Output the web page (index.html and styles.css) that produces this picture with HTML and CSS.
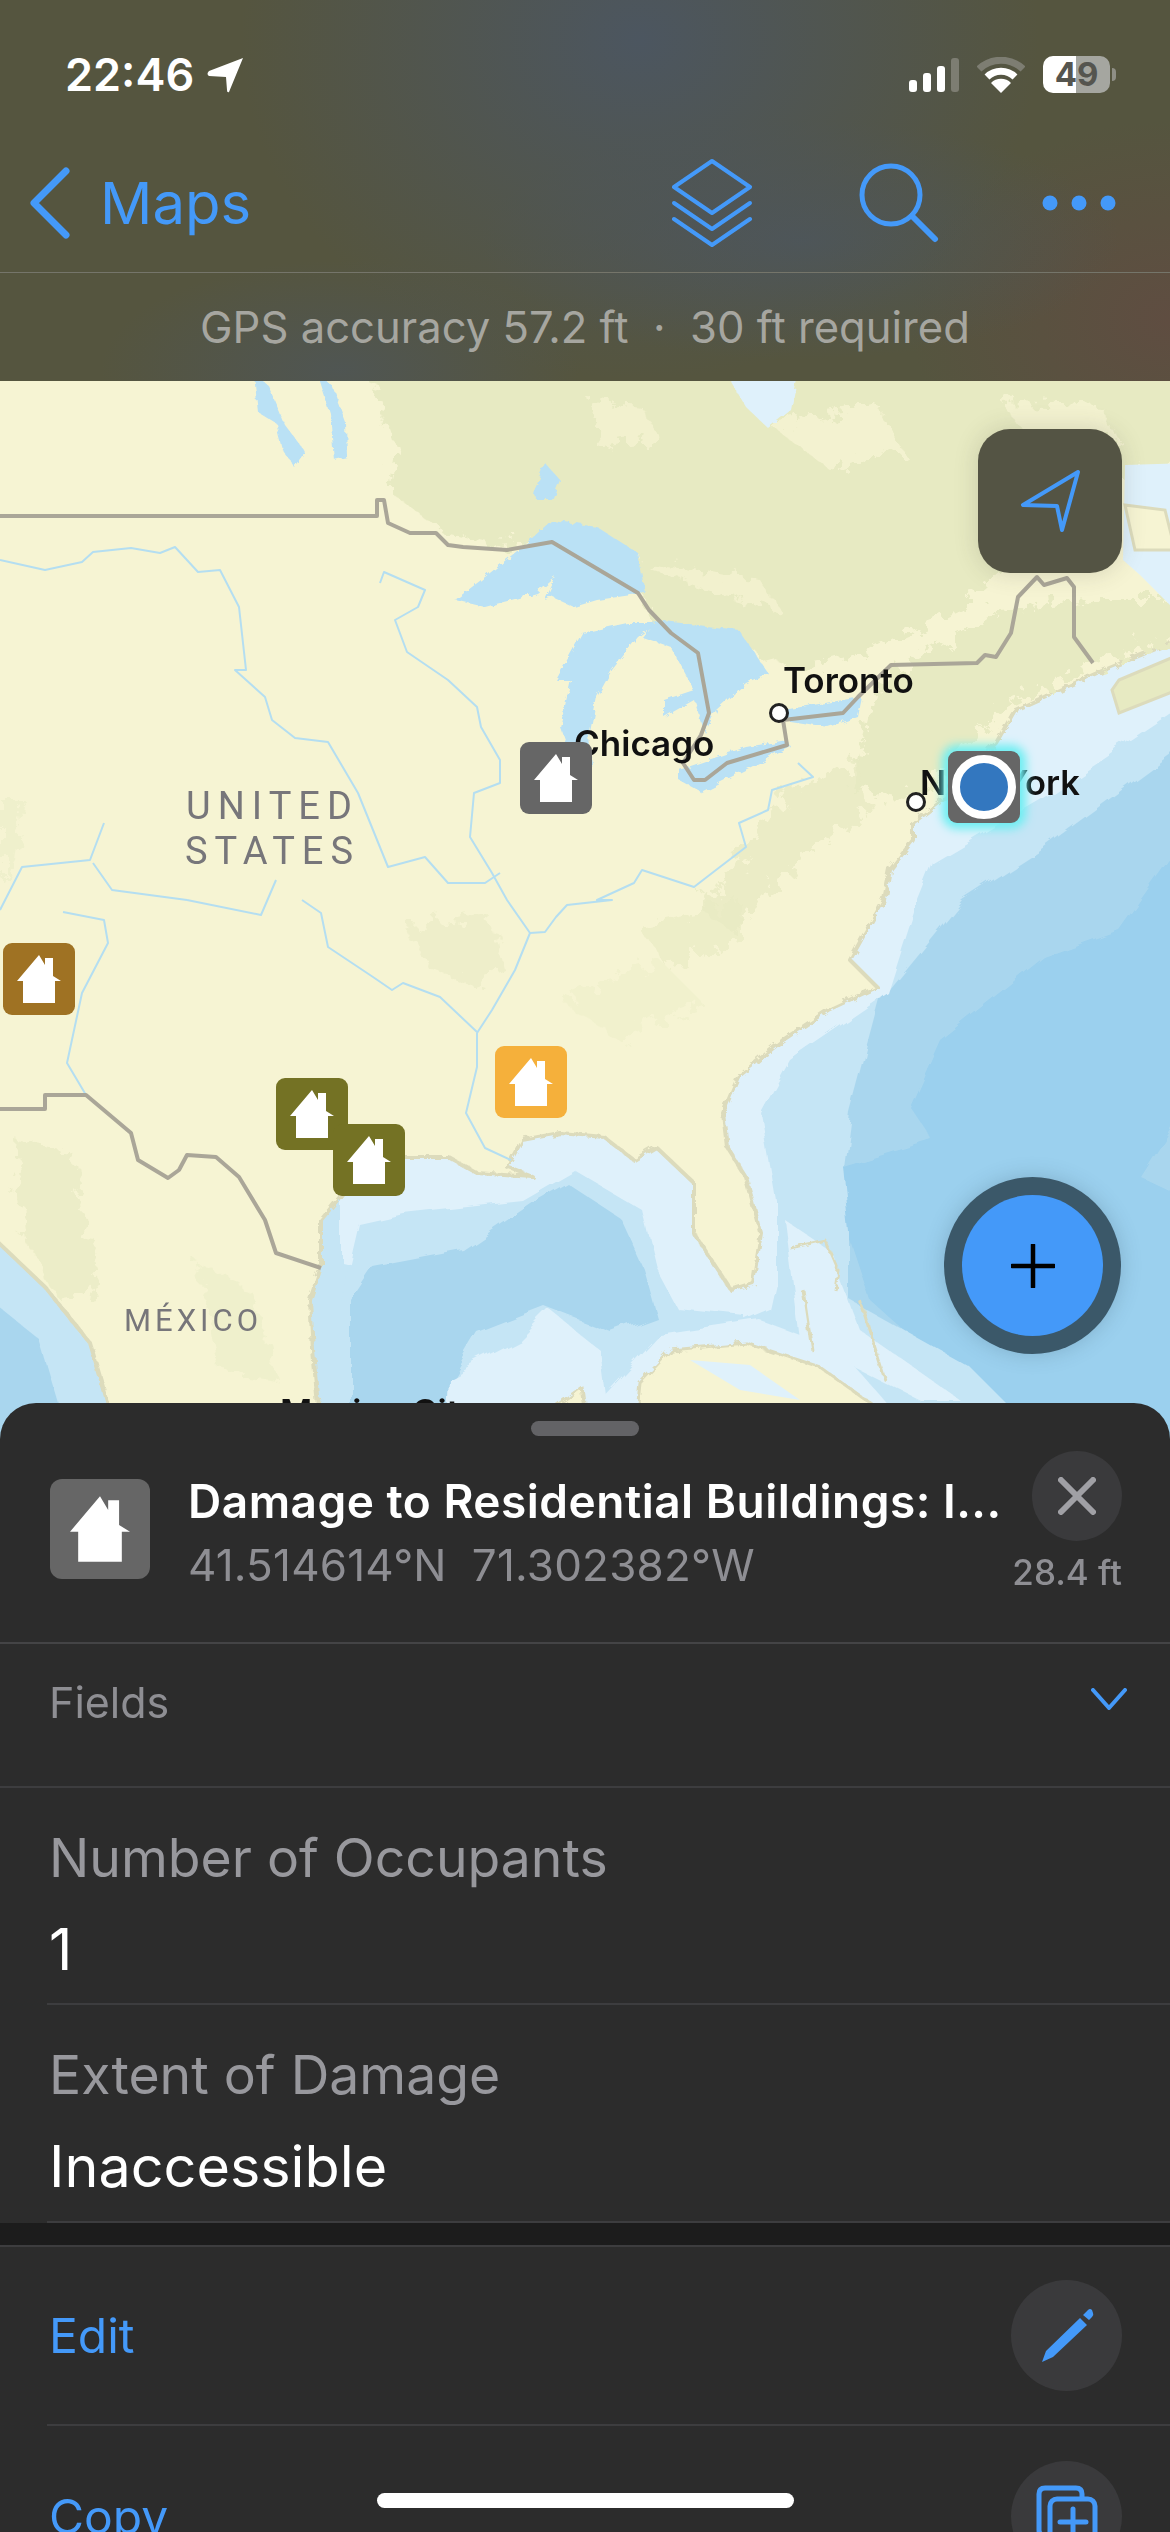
FILE: index.html
```html
<!DOCTYPE html>
<html lang="en">
<head>
    <meta charset="UTF-8">
    <meta name="viewport" content="width=device-width, initial-scale=1.0">
    <title>Maps</title>
    <link rel="stylesheet" href="styles.css">
</head>
<body>

<svg class="icon-defs" width="0" height="0">
    <defs>
        <symbol id="house" viewBox="0 0 44 48">
            <path d="M22 0 L28 10 V3 H36 V21 L44 26 H38 V48 H6 V26 H0 Z" fill="#fff"/>
        </symbol>
        <filter id="rough" x="-5%" y="-5%" width="110%" height="110%">
            <feTurbulence type="fractalNoise" baseFrequency="0.07" numOctaves="4" seed="4"/>
            <feDisplacementMap in="SourceGraphic" scale="34"/>
        </filter>
        <filter id="soft" x="-5%" y="-5%" width="110%" height="110%">
            <feTurbulence type="fractalNoise" baseFrequency="0.03" numOctaves="2" seed="9"/>
            <feDisplacementMap in="SourceGraphic" scale="14"/>
        </filter>
        <filter id="coast" x="-5%" y="-5%" width="110%" height="110%">
            <feTurbulence type="fractalNoise" baseFrequency="0.12" numOctaves="3" seed="2"/>
            <feDisplacementMap in="SourceGraphic" scale="7"/>
        </filter>
    </defs>
</svg>

<header class="top-bar">
    <div class="status-bar">
        <div class="status-time">
            <span>22:46</span>
            <svg width="37" height="35" viewBox="0 0 37 35"><path d="M36 0 L22 34 Q20 35 20 32 L19 19 L2 18 Q-1 16 2 13 Z" fill="#fff"/></svg>
        </div>
        <div class="status-icons">
            <svg width="50" height="34" viewBox="0 0 50 34">
                <rect x="0" y="22" width="8" height="12" rx="3" fill="#fff"/>
                <rect x="14" y="15" width="8" height="19" rx="3" fill="#fff"/>
                <rect x="28" y="8" width="8" height="26" rx="3" fill="#fff"/>
                <rect x="42" y="0" width="8" height="34" rx="3" fill="#7d7d72"/>
            </svg>
            <svg width="48" height="36" viewBox="0 0 48 36">
                <path d="M2 12 A32 32 0 0 1 46 12" fill="none" stroke="#7d7d72" stroke-width="7"/>
                <path d="M10 20 A20 20 0 0 1 38 20" fill="none" stroke="#fff" stroke-width="7"/>
                <path d="M24 36 L14 26 A14 14 0 0 1 34 26 Z" fill="#fff"/>
            </svg>
            <div class="battery">
                <span class="battery-level">49</span>
            </div>
        </div>
    </div>
    <nav class="nav-bar">
        <a class="back-link">
            <svg width="42" height="72" viewBox="0 0 42 72"><path d="M37 4 L5 36 L37 68" fill="none" stroke="#4499f9" stroke-width="7" stroke-linecap="round" stroke-linejoin="round"/></svg>
            <span>Maps</span>
        </a>
        <div class="nav-actions">
            <svg class="nav-layers" width="82" height="88" viewBox="0 0 82 88" fill="none" stroke="#4499f9" stroke-width="4" stroke-linejoin="round" stroke-linecap="round">
                <path d="M41 2 L79 28 L41 54 L3 28 Z"/>
                <path d="M3 44 L41 70 L79 44"/>
                <path d="M3 60 L41 86 L79 60"/>
            </svg>
            <svg class="nav-search" width="80" height="80" viewBox="0 0 80 80" fill="none" stroke="#4499f9" stroke-width="5" stroke-linecap="round">
                <circle cx="32" cy="32" r="29"/>
                <path d="M53 53 L76 76" stroke-width="6"/>
            </svg>
            <svg class="nav-more" width="74" height="16" viewBox="0 0 74 16" fill="#4499f9">
                <circle cx="8" cy="8" r="7.5"/>
                <circle cx="37" cy="8" r="7.5"/>
                <circle cx="66" cy="8" r="7.5"/>
            </svg>
        </div>
    </nav>
    <div class="gps-row">GPS accuracy 57.2 ft &nbsp;&middot;&nbsp; 30 ft required</div>
</header>

<main class="map">
    <!-- base map, drawn in page coordinates -->
    <svg class="map-art" width="1170" height="1060" viewBox="0 381 1170 1060">
        <rect x="0" y="381" width="1170" height="1060" fill="#a9d6ee"/>
        <g filter="url(#soft)">
            <path fill="#9bd0ee" d="M1190 830 L1119 930 L1044 957 L940 1040 L910 1107 L932 1140 L843 1167 L850 1240 L870 1300 L960 1380 L1060 1441 L1190 1441 L1190 1200 L1141 1177 L1190 1100 Z"/>
            <path fill="#c5e5f5" d="M1190 740 L1044 847 L962 900 L880 1000 L850 1113 L843 1167 L850 1233 L850 1300 L970 1367 L1044 1441 L-10 1441 L-10 370 L1190 370 Z"/>
            <path fill="#dff1fb" d="M1190 700 L1040 800 L933 863 L918 900 L888 993 L790 1060 L761 1113 L776 1200 L776 1283 L770 1310 L700 1340 L500 1300 L340 1260 L340 370 L1190 370 Z"/>
            <path fill="#c5e5f5" d="M358 1223 L403 1213 L522 1200 L574 1170 L642 1210 L656 1267 L679 1310 L746 1317 L746 1340 L671 1347 L627 1383 L612 1441 L340 1441 L340 1300 Z"/>
            <path fill="#a9d6ee" d="M373 1267 L463 1250 L537 1200 L567 1183 L619 1217 L642 1267 L656 1317 L612 1333 L545 1307 L478 1333 L448 1383 L448 1441 L351 1441 L351 1300 Z"/>
            <path fill="#dff1fb" d="M445 1441 L448 1377 L520 1340 L550 1310 L600 1350 L612 1441 Z"/>
            <path fill="#a9d6ee" d="M-10 1300 L40 1340 L70 1441 L-10 1441 Z"/>
            <path fill="#dff1fb" d="M785 1220 L830 1250 L860 1330 L960 1400 L920 1400 L800 1340 Z"/>
            <path fill="#dff1fb" d="M600 1400 L660 1335 L760 1320 L840 1350 L920 1441 L600 1441 Z"/>
        </g>

        <!-- land -->
        <g filter="url(#coast)">
            <path fill="#f6f4d3" stroke="#dcdbbc" stroke-width="4" stroke-linejoin="round" d="M-20 360 L1190 360 L1190 635 L1097 673 L1015 710 L996 743 L943 800 L913 823 L913 840 L890 870 L884 900 L865 933 L850 960 L877 987 L828 1010 L783 1040 L738 1077 L723 1113 L727 1147 L746 1177 L761 1233 L753 1283 L731 1290 L716 1267 L694 1233 L694 1183 L656 1147 L634 1160 L604 1137 L560 1133 L522 1140 L507 1167 L533 1177 L477 1173 L448 1157 L403 1157 L343 1193 L321 1220 L321 1267 L310 1300 L313 1350 L321 1441 L119 1441 L90 1343 L45 1287 L-20 1225 Z"/>
        </g>
        <g filter="url(#rough)" fill="#e7eac2">
            <path d="M365 360 L395 447 L388 490 L440 530 L500 545 L552 540 L640 590 L660 640 L745 650 L800 670 L870 650 L960 610 L1005 570 L1020 520 L1190 460 L1190 360 Z"/>
            <path d="M880 680 L1000 610 L1100 600 L1190 600 L1190 635 L1090 665 L1005 705 L960 760 L905 800 L850 790 Z"/>
            <path d="M790 790 L860 760 L870 810 L800 860 L730 930 L700 910 Z" opacity="0.75"/>
            <path d="M410 925 L490 915 L505 970 L470 985 L425 965 Z" opacity="0.55"/>
            <path d="M15 1140 L70 1150 L100 1290 L60 1300 L25 1240 Z" opacity="0.65"/>
            <path d="M560 1000 L660 960 L700 1000 L620 1040 Z" opacity="0.35"/>
            <path d="M640 930 L740 900 L740 940 L670 970 Z" opacity="0.6"/>
            <path d="M0 800 L25 800 L15 860 L0 880 Z" opacity="0.4"/>
            <path d="M195 1260 L250 1290 L280 1380 L220 1370 Z" opacity="0.4"/>
        </g>
        <g filter="url(#rough)" fill="#f6f4d3">
            <path d="M770 425 L880 405 L900 450 L830 470 Z" opacity="0.8"/>
            <path d="M1000 400 L1100 405 L1120 440 L1040 455 Z" opacity="0.8"/>
            <path d="M590 400 L640 405 L660 440 L600 450 Z" opacity="0.7"/>
            <path d="M640 560 L760 580 L780 610 L670 580 Z" opacity="0.7"/>
        </g>

        <!-- lakes and northern water -->
        <g fill="#bae1f5" filter="url(#coast)">
            <path d="M455 600 L485 577 L522 547 L552 520 L597 527 L638 553 L645 593 L597 600 L574 607 L552 597 L545 600 L556 577 L537 593 L485 607 Z"/>
            <path d="M582 633 L627 623 L656 623 L638 637 L612 670 L597 697 L589 737 L593 773 L567 747 L560 727 L571 680 L556 680 Z"/>
            <path d="M656 620 L739 630 L768 673 L746 683 L716 710 L705 733 L694 700 L664 717 L664 700 L694 690 L671 647 L642 637 Z"/>
            <path d="M679 770 L746 747 L787 740 L791 747 L731 777 L701 792 L679 780 Z"/>
            <path d="M783 710 L843 700 L862 697 L858 717 L828 727 L783 720 Z"/>
            <path d="M533 490 L545 463 L560 480 L552 500 L537 500 Z"/>
            <path d="M254 375 L268 385 L285 425 L306 453 L295 468 L283 450 L276 423 L258 412 Z"/>
            <path d="M318 375 L332 385 L346 423 L347 457 L334 460 L330 413 Z"/>
        </g>
        <path fill="#dff1fb" d="M727 375 L798 375 L791 410 L768 428 L746 407 Z" filter="url(#coast)"/>
        <path fill="#dff1fb" d="M1190 463 L1125 465 L1123 560 L1140 575 L1190 625 Z"/>
        <path fill="#f6f4d3" stroke="#dcdbbc" stroke-width="3" d="M1125 505 L1165 510 L1175 550 L1135 550 Z"/>
        <path fill="#e7eac2" stroke="#dcdbbc" stroke-width="3" d="M1119 680 L1190 650 L1190 685 L1119 713 L1112 690 Z"/>

        <!-- islands -->
        <g fill="#f6f4d3" stroke="#dcdbbc" stroke-width="3" stroke-linejoin="round" filter="url(#coast)">
            <path d="M634 1441 L640 1383 L671 1350 L746 1343 L820 1367 L880 1410 L890 1441 Z"/>
            <path d="M507 1441 L582 1387 L589 1441 Z"/>
            <path d="M790 1248 L825 1240 L838 1270 L835 1290" fill="none"/>
            <path d="M803 1290 L812 1350" fill="none"/>
            <path d="M860 1300 L885 1380" fill="none"/>
        </g>
        <path fill="#dff1fb" d="M690 1360 L750 1365 L800 1400 L740 1390 Z"/>

        <!-- rivers -->
        <g fill="none" stroke="#b4def1" stroke-width="2" stroke-linejoin="round">
            <polyline points="0,560 45,570 82,562 93,552 131,548 160,553 175,547 198,572 220,570 239,607 246,670 235,670 265,697 272,720 295,738 328,742 358,793 388,867 425,857 448,883 485,883 500,873"/>
            <polyline points="380,583 384,572 425,590 418,607 395,620 407,652 448,680 477,707 481,727 500,760 500,783 474,793 470,837 492,873 507,900 530,933 515,970 492,1010 477,1033 477,1067 466,1113 485,1148 511,1160"/>
            <polyline points="798,763 813,777 772,790 768,810 739,823 746,847 716,870 694,887 642,870 634,883 597,900 612,900 567,905 556,917 545,932 530,933"/>
            <polyline points="302,900 321,913 328,947 373,977 392,990 403,983 440,997 477,1032"/>
            <polyline points="63,912 104,920 108,943 82,993 67,1063 86,1095"/>
            <polyline points="187,900 261,915 276,880"/>
            <polyline points="0,910 22,867 90,860 104,823"/>
            <polyline points="93,863 112,890 187,900"/>
        </g>

        <!-- borders -->
        <g fill="none" stroke="#aaa698" stroke-width="4" stroke-linejoin="round">
            <polyline points="0,516 377,516 377,500 384,500 388,523 410,533 436,533 448,545 463,547 507,550 552,542 638,593 649,610 671,633 698,653 709,713 701,735 683,763 694,780 705,780 727,763 787,745 783,720 843,713 858,697 891,665 977,663 985,655 996,657 1011,633 1018,597 1037,577 1044,585 1067,578 1074,587 1074,637 1093,663"/>
            <polyline points="0,1109 45,1109 45,1095 86,1095 131,1133 138,1160 168,1178 179,1170 187,1155 216,1157 239,1177 265,1220 276,1253 321,1268"/>
        </g>
    </svg>

    <!-- labels and pins -->
    <span class="place-label label-toronto">Toronto</span>
    <span class="place-label label-chicago">Chicago</span>
    <span class="place-label label-newyork">New York</span>
    <span class="place-label label-mexcity">Mexico City</span>
    <span class="city-dot dot-toronto"></span>
    <span class="city-dot dot-newyork"></span>
    <span class="country-label label-us">UNITED<br>STATES</span>
    <span class="country-label label-mx">MÉXICO</span>

    <div class="pin pin-gray pin-a"><svg width="44" height="48"><use href="#house"/></svg></div>
    <div class="pin pin-brown pin-b"><svg width="44" height="48"><use href="#house"/></svg></div>
    <div class="pin pin-olive pin-c"><svg width="44" height="48"><use href="#house"/></svg></div>
    <div class="pin pin-olive pin-d"><svg width="44" height="48"><use href="#house"/></svg></div>
    <div class="pin pin-orange pin-e"><svg width="44" height="48"><use href="#house"/></svg></div>
    <div class="pin pin-gray pin-selected"><span class="my-location"></span></div>

    <button class="locate-btn">
        <svg width="62" height="62" viewBox="0 0 62 62"><path d="M59 2 L4 35 L38 36 L43 60 Z" fill="none" stroke="#4499f9" stroke-width="4" stroke-linejoin="round"/></svg>
    </button>
    <button class="add-btn">
        <span class="add-inner">
            <svg width="44" height="44" viewBox="0 0 44 44"><path d="M22 1 V43 M1 22 H43" stroke="#000" stroke-width="4.5" stroke-linecap="round"/></svg>
        </span>
    </button>
</main>

<section class="sheet">
    <div class="sheet-handle"></div>
    <div class="sheet-head">
        <div class="head-icon"><svg width="60" height="66"><use href="#house"/></svg></div>
        <div class="head-text">
            <div class="head-title">Damage to Residential Buildings: I...</div>
            <div class="head-coords">41.514614°N&nbsp; 71.302382°W</div>
        </div>
        <div class="head-side">
            <button class="close-btn">
                <svg width="38" height="38" viewBox="0 0 38 38"><path d="M3 3 L35 35 M35 3 L3 35" stroke="#a0a0a5" stroke-width="6" stroke-linecap="round"/></svg>
            </button>
            <div class="head-dist">28.4 ft</div>
        </div>
    </div>

    <div class="fields-row">
        <span>Fields</span>
        <svg width="36" height="22" viewBox="0 0 36 22"><path d="M2 2 L18 20 L34 2" fill="none" stroke="#4499f9" stroke-width="4" stroke-linecap="round" stroke-linejoin="round"/></svg>
    </div>

    <div class="field">
        <div class="field-name">Number of Occupants</div>
        <div class="field-value">1</div>
    </div>
    <div class="field field-last">
        <div class="field-name">Extent of Damage</div>
        <div class="field-value">Inaccessible</div>
    </div>

    <div class="section-gap"></div>

    <div class="action-row">
        <span>Edit</span>
        <span class="action-icon">
            <svg width="54" height="56" viewBox="0 0 54 56" fill="#4499f9"><path d="M40 10 L47 17 L13 49 L2 54 L6 43 Z M43 7 L48 2 Q50 0 52 2 L53 5 Q54 7 52 9 L49 12 Z"/></svg>
        </span>
    </div>
    <div class="action-row action-last">
        <span>Copy</span>
        <span class="action-icon">
            <svg width="62" height="62" viewBox="0 0 62 62" fill="none" stroke="#4499f9" stroke-width="5" stroke-linejoin="round" stroke-linecap="round">
                <path d="M10 50 H8 Q3 50 3 45 V9 Q3 3 9 3 H40 Q46 3 46 9 V12"/>
                <rect x="14" y="14" width="45" height="45" rx="7"/>
                <path d="M37 24 V50 M24 37 H50"/>
            </svg>
        </span>
    </div>
</section>

<div class="home-bar"></div>

</body>
</html>
```

FILE: styles.css
```css
/* page */
html, body {
    margin: 0;
    padding: 0;
    height: 2532px;
    overflow: hidden;
}

body {
    position: relative;
    width: 1170px;
    font-family: Inter, "Noto Sans", sans-serif;
    background-color: #2c2c2c;
}

button {
    border: none;
    padding: 0;
    font: inherit;
}

.icon-defs {
    position: absolute;
}

/* top bar */
.top-bar {
    height: 381px;
    box-sizing: border-box;
    background:
        radial-gradient(ellipse 400px 340px at 640px 40px, #4c5660, rgba(76, 86, 96, 0) 100%),
        radial-gradient(ellipse 320px 120px at 800px 240px, rgba(76, 86, 96, 0.7), rgba(76, 86, 96, 0) 100%),
        radial-gradient(ellipse 240px 110px at 340px 370px, rgba(76, 86, 96, 0.6), rgba(76, 86, 96, 0) 100%),
        radial-gradient(ellipse 260px 200px at 1170px 320px, #5f4d41, rgba(95, 77, 65, 0) 100%),
        #55553f;
}

.status-bar {
    height: 160px;
    box-sizing: border-box;
    display: flex;
    justify-content: space-between;
    align-items: flex-start;
    padding: 55px 60px 0 65px;
}

.status-time {
    display: flex;
    align-items: center;
    gap: 13px;
    color: #fff;
    font-size: 45px;
    font-weight: 600;
    line-height: 40px;
}

.status-icons {
    display: flex;
    align-items: center;
    gap: 18px;
    padding-top: 1px;
}

.battery {
    position: relative;
    width: 67px;
    height: 37px;
    border-radius: 10px;
    background: linear-gradient(to right, #fff 50%, #a5a6a0 50%);
    text-align: center;
}

.battery::after {
    content: "";
    position: absolute;
    right: -6px;
    top: 12px;
    width: 4px;
    height: 13px;
    border-radius: 0 4px 4px 0;
    background-color: #8f8f86;
}

.battery-level {
    color: #55554f;
    font-size: 33px;
    font-weight: 700;
    line-height: 37px;
}

.nav-bar {
    height: 113px;
    box-sizing: border-box;
    display: flex;
    justify-content: space-between;
    align-items: center;
    padding: 0 54px 26px 29px;
    border-bottom: 1px solid #75756a;
}

.back-link {
    display: flex;
    align-items: center;
    gap: 29px;
    color: #4499f9;
    font-size: 58px;
}

.nav-actions {
    display: flex;
    align-items: center;
    gap: 103px;
}

.nav-search {
    margin-left: 3px;
}

.gps-row {
    height: 107px;
    line-height: 109px;
    text-align: center;
    color: #a6a6a0;
    font-size: 43.6px;
}

/* map */
.map {
    position: relative;
    height: 1060px;
    overflow: hidden;
    background-color: #f6f4d3;
}

.map-art {
    display: block;
}

.place-label {
    position: absolute;
    color: #111;
    font-size: 35px;
    font-weight: 600;
    line-height: 40px;
    white-space: nowrap;
}

.label-toronto { left: 783px; top: 279px; }
.label-chicago { left: 574px; top: 342px; }
.label-newyork { left: 920px; top: 382px; font-size: 34.5px; }
.label-mexcity { left: 280px; top: 1011px; }

.city-dot {
    position: absolute;
    width: 14px;
    height: 14px;
    border: 3px solid #222;
    border-radius: 50%;
    background-color: #fff;
}

.dot-toronto { left: 769px; top: 322px; }
.dot-newyork { left: 906px; top: 411px; }

.country-label {
    position: absolute;
    color: #77767a;
    font-family: Roboto, sans-serif;
    font-size: 38px;
    font-weight: 400;
    letter-spacing: 7px;
    line-height: 45px;
    text-align: center;
}

.label-us { left: 185px; top: 403px; }
.label-mx {
    left: 124px;
    top: 920px;
    font-size: 31px;
    letter-spacing: 4px;
    line-height: 40px;
}

.pin {
    position: absolute;
    width: 72px;
    height: 72px;
    border-radius: 9px;
    display: flex;
    align-items: center;
    justify-content: center;
}

.pin-gray { background-color: #666; }
.pin-brown { background-color: #9f7223; }
.pin-olive { background-color: #747224; }
.pin-orange { background-color: #f5b03b; }

.pin-a { left: 520px; top: 361px; }
.pin-b { left: 3px; top: 562px; }
.pin-c { left: 276px; top: 697px; }
.pin-d { left: 333px; top: 743px; }
.pin-e { left: 495px; top: 665px; }

.pin-selected {
    left: 948px;
    top: 370px;
    box-shadow: 0 0 10px 6px #6eeef2;
}

.my-location {
    width: 48px;
    height: 48px;
    border: 8px solid #fff;
    border-radius: 50%;
    background-color: #3377bf;
}

.locate-btn {
    position: absolute;
    left: 978px;
    top: 48px;
    width: 144px;
    height: 144px;
    border-radius: 32px;
    background-color: #545444;
    box-shadow: 0 0 24px rgba(60, 60, 50, 0.18);
    display: flex;
    align-items: center;
    justify-content: center;
}

.add-btn {
    position: absolute;
    left: 944px;
    top: 796px;
    width: 177px;
    height: 177px;
    border-radius: 50%;
    background-color: #3b5869;
    box-shadow: 0 0 20px rgba(50, 80, 100, 0.25);
    display: flex;
    align-items: center;
    justify-content: center;
}

.add-inner {
    width: 141px;
    height: 141px;
    border-radius: 50%;
    background-color: #4499f9;
    display: flex;
    align-items: center;
    justify-content: center;
}

/* bottom sheet */
.sheet {
    position: relative;
    margin-top: -38px;
    border-radius: 36px 36px 0 0;
    background-color: #2c2c2c;
}

.sheet-handle {
    position: absolute;
    left: 531px;
    top: 18px;
    width: 108px;
    height: 15px;
    border-radius: 8px;
    background-color: #636366;
}

.sheet-head {
    height: 241px;
    box-sizing: border-box;
    display: flex;
    padding: 48px 48px 0 50px;
    border-bottom: 2px solid #444446;
}

.head-icon {
    width: 100px;
    height: 100px;
    margin-top: 28px;
    border-radius: 12px;
    background-color: #666;
    display: flex;
    align-items: center;
    justify-content: center;
}

.head-text {
    flex: 1;
    padding-left: 38px;
    padding-top: 23px;
}

.head-title {
    color: #fff;
    font-size: 46px;
    font-weight: 600;
    letter-spacing: 0.5px;
    line-height: 54px;
    white-space: nowrap;
}

.head-coords {
    margin-top: 12px;
    color: #8e8e93;
    font-size: 44px;
    letter-spacing: 0.2px;
    line-height: 50px;
}

.head-side {
    display: flex;
    flex-direction: column;
    align-items: flex-end;
}

.close-btn {
    width: 90px;
    height: 90px;
    border-radius: 50%;
    background-color: #3a3a3c;
    display: flex;
    align-items: center;
    justify-content: center;
}

.head-dist {
    margin-top: 11px;
    color: #8e8e93;
    font-size: 35px;
    font-weight: 500;
    line-height: 40px;
    white-space: nowrap;
}

.fields-row {
    height: 144px;
    box-sizing: border-box;
    display: flex;
    justify-content: space-between;
    padding: 33px 43px 0 49px;
    border-bottom: 2px solid #3d3d3f;
    color: #8e8e93;
    font-size: 43px;
    line-height: 50px;
}

.fields-row svg {
    margin-top: 11px;
}

.field {
    height: 217px;
    box-sizing: border-box;
    margin-left: 47px;
    padding: 40px 0 0 2px;
    border-bottom: 2px solid #3d3d3f;
}

.field-last {
    height: 218px;
}

.field-name {
    color: #98989d;
    font-size: 53.5px;
    line-height: 60px;
}

.field-value {
    margin-top: 26px;
    color: #fff;
    font-size: 57.5px;
    line-height: 70px;
}

.section-gap {
    height: 22px;
    background-color: #1c1c1c;
    border-bottom: 2px solid #3d3d3f;
}

.action-row {
    height: 179px;
    box-sizing: border-box;
    margin-left: 47px;
    padding: 0 48px 0 2px;
    display: flex;
    justify-content: space-between;
    align-items: center;
    border-bottom: 2px solid #3d3d3f;
    color: #4499f9;
    font-size: 48px;
}

.action-last {
    border-bottom: none;
    height: 180px;
}

.action-icon {
    width: 111px;
    height: 111px;
    border-radius: 50%;
    background-color: #3a3a3c;
    display: flex;
    align-items: center;
    justify-content: center;
}

.home-bar {
    position: absolute;
    left: 377px;
    top: 2493px;
    width: 417px;
    height: 15px;
    border-radius: 8px;
    background-color: #fff;
}
```
